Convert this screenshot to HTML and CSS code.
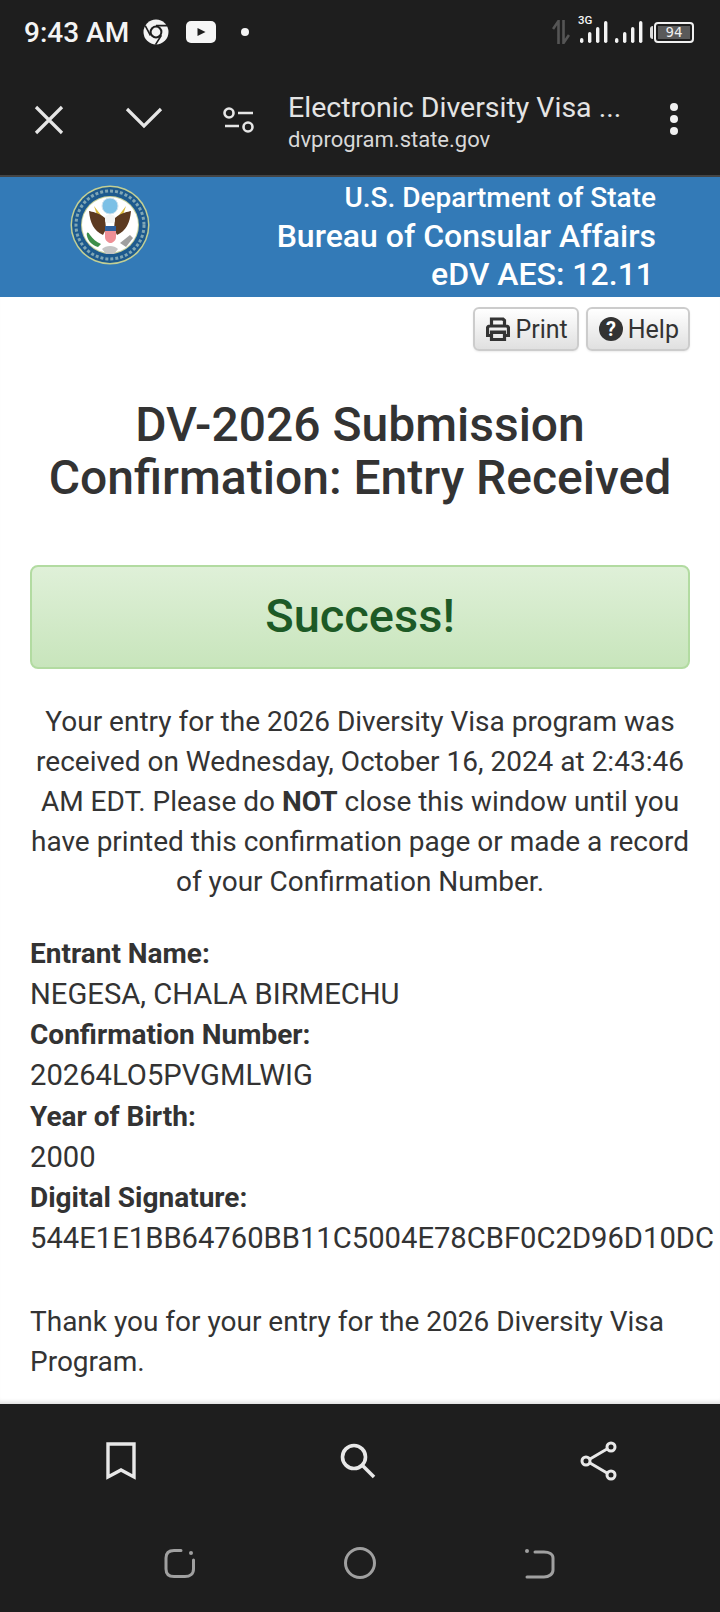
FILE: index.html
```html
<!DOCTYPE html>
<html lang="en">
<head>
<meta charset="utf-8">
<title>DV-2026 Submission Confirmation</title>
<link rel="stylesheet" href="styles.css">
</head>
<body>
<div class="phone">
  <div class="status">
    <div class="status-left">
      <span class="time">9:43 AM</span>
      <svg class="ic-chrome" viewBox="0 0 26 26"><circle cx="13" cy="13" r="12.5" fill="#f4f4f4"/><circle cx="13" cy="13" r="6.4" fill="#1e1e1e"/><circle cx="13" cy="13" r="4.4" fill="#f4f4f4"/><path d="M13 6.6H24.4M7.5 16.5L2.2 6.6M18.4 16.3L12.5 25.6" stroke="#1e1e1e" stroke-width="1.6" fill="none"/></svg>
      <svg class="ic-yt" viewBox="0 0 30 22"><rect width="30" height="22" rx="5" fill="#f6f6f6"/><path d="M11.500 7L19.500 11L11.500 15Z" fill="#1e1e1e"/></svg>
      <span class="dot"></span>
    </div>
    <div class="status-right">
      <svg class="ic-data" viewBox="0 0 18 24"><path d="M6.500 24V1L1 9M11.500 0V23L17 15" stroke="#555" stroke-width="2.600" fill="none"/></svg>
      <div class="signal">
        <span class="net">3G</span>
        <svg class="ic-bars" viewBox="0 0 28 24"><g fill="#f4f4f4"><rect x="0" y="18" width="3.400" height="5" rx="1.700"/><rect x="8" y="12" width="3.400" height="11" rx="1.700"/><rect x="16" y="7" width="3.400" height="16" rx="1.700"/><rect x="24" y="1" width="3.400" height="22" rx="1.700"/></g></svg>
        <svg class="ic-bars" viewBox="0 0 28 24"><g fill="#f4f4f4"><rect x="0" y="18" width="3.400" height="5" rx="1.700"/><rect x="8" y="12" width="3.400" height="11" rx="1.700"/><rect x="16" y="7" width="3.400" height="16" rx="1.700"/><rect x="24" y="1" width="3.400" height="22" rx="1.700"/></g></svg>
      </div>
      <div class="battery-cap"></div>
      <div class="battery"><span class="battery-fill">94</span></div>
    </div>
  </div>
  <div class="toolbar">
    <svg class="tb-close" viewBox="0 0 30 30"><path d="M2 2L28 28M28 2L2 28" stroke="#e6e6e6" stroke-width="3.200" fill="none"/></svg>
    <svg class="tb-chev" viewBox="0 0 38 24"><path d="M2 3L19 20L36 3" stroke="#e6e6e6" stroke-width="3.200" fill="none"/></svg>
    <svg class="tb-tune" viewBox="0 0 32 26"><g stroke="#e6e6e6" stroke-width="2.600" fill="none"><circle cx="6" cy="6" r="4.500"/><path d="M15 6H30M2 19H16"/><circle cx="25" cy="20" r="4.500"/></g></svg>
    <div class="tb-title">
      <div class="tb-name">Electronic Diversity Visa ...</div>
      <div class="tb-url">dvprogram.state.gov</div>
    </div>
    <div class="tb-more"><span></span><span></span><span></span></div>
  </div>
  <header class="banner">
    <svg class="seal" viewBox="0 0 80 80">
      <circle cx="40" cy="40" r="39.500" fill="#c3cf94"/>
      <circle cx="40" cy="40" r="38" fill="#1d5a8e"/>
      <circle cx="40" cy="40" r="34" fill="none" stroke="#7fa6b5" stroke-width="3" stroke-dasharray="3 2"/>
      <circle cx="40" cy="40" r="29" fill="#c7d09a"/>
      <circle cx="40" cy="40" r="28" fill="#fff"/>
      <circle cx="40" cy="21" r="8" fill="#7cc0e6" stroke="#cfe3ef"/>
      <path d="M24 21L34 34L29 36ZM56 21L46 34L51 36Z" fill="#d9b93c"/>
      <path d="M35 33C28 27 22 27 19 26C20 38 24 46 33 50L36 44ZM45 33C52 27 58 27 61 26C60 38 56 46 47 50L44 44Z" fill="#5c3a21"/>
      <rect x="35" y="30" width="10" height="8" rx="3" fill="#f4f4f4"/>
      <rect x="35" y="41" width="11" height="5" fill="#2c5f9e"/>
      <path d="M35 46H46V52C46 56 42 58 40.500 58C39 58 35 56 35 52Z" fill="#ef8f96"/>
      <path d="M20 50C18 46 16 47 17 51C18 56 22 60 28 62L31 59C26 57 23 54 20 50Z" fill="#3d8f4a"/>
      <path d="M50 58L60 50L63 53L56 62Z" fill="#a0a0a0"/>
      <path d="M32 64C36 60 44 60 48 64L44 69H36Z" fill="#c4c4c4"/>
    </svg>
    <div class="banner-text">
      <div class="b1">U.S. Department of State</div>
      <div class="b2">Bureau of Consular Affairs</div>
      <div class="b3">eDV AES: 12.11</div>
    </div>
  </header>
  <main class="page">
    <div class="actions">
      <button class="btn"><svg class="btn-ic" viewBox="0 0 24 24"><path d="M5.500 9V2H17L18.500 3.500V9M1.500 18.500V11.500C1.500 10 2.500 9 4 9H20C21.500 9 22.500 10 22.500 11.500V18.500H18.500V15H5.500V18.500ZM5.500 15.500H18.500V22.500H5.500Z" fill="none" stroke="#333" stroke-width="3.200"/></svg>Print</button>
      <button class="btn"><svg class="btn-ic" viewBox="0 0 24 24"><circle cx="12" cy="12" r="12" fill="#333"/><text x="12" y="18.500" class="btn-q">?</text></svg>Help</button>
    </div>
    <h1 class="title">DV-2026 Submission Confirmation: Entry Received</h1>
    <div class="alert">Success!</div>
    <p class="lead">Your entry for the 2026 Diversity Visa program was received on Wednesday, October 16, 2024 at 2:43:46 AM EDT. Please do <b>NOT</b> close this window until you have printed this confirmation page or made a record of your Confirmation Number.</p>
    <dl class="details">
      <dt>Entrant Name:</dt><dd>NEGESA, CHALA BIRMECHU</dd>
      <dt>Confirmation Number:</dt><dd>20264LO5PVGMLWIG</dd>
      <dt>Year of Birth:</dt><dd>2000</dd>
      <dt>Digital Signature:</dt><dd>544E1E1BB64760BB11C5004E78CBF0C2D96D10DC</dd>
    </dl>
    <p class="thanks">Thank you for your entry for the 2026 Diversity Visa Program.</p>
  </main>
  <div class="bottom">
    <div class="bottom-actions">
      <svg class="ba-book" viewBox="0 0 30 38"><path d="M2 2H28V35L15 28L2 35Z" stroke="#e8e8e8" stroke-width="3.400" fill="none"/></svg>
      <svg class="ba-search" viewBox="0 0 38 38"><circle cx="15" cy="15" r="11.500" stroke="#e8e8e8" stroke-width="3.600" fill="none"/><path d="M23 23L35 35" stroke="#e8e8e8" stroke-width="3.600"/></svg>
      <svg class="ba-share" viewBox="0 0 38 40"><g stroke="#e8e8e8" stroke-width="3" fill="none"><circle cx="6" cy="20" r="4"/><circle cx="31" cy="6" r="4"/><circle cx="31" cy="34" r="4"/><path d="M10 18L27 8M10 22L27 32"/></g></svg>
    </div>
    <div class="nav">
      <svg class="nav-ic" viewBox="0 0 32 32"><path d="M29.500 13V22C29.500 27 26 29.500 21 29.500H10C5 29.500 2 27 2 22V11C2 6 5 3.500 10 3.500H17" stroke="#a0a0a0" stroke-width="3" fill="none" stroke-linecap="round"/><circle cx="27" cy="6" r="2" fill="#a0a0a0"/></svg>
      <svg class="nav-ic" viewBox="0 0 32 32"><circle cx="16" cy="16" r="14.500" stroke="#a0a0a0" stroke-width="3" fill="none"/></svg>
      <svg class="nav-ic" viewBox="0 0 32 32"><path d="M3 30H20C25 30 29 27 29 23V11C29 7 25 5 20 5H11" stroke="#a0a0a0" stroke-width="3" fill="none" stroke-linecap="round"/><circle cx="3" cy="4" r="2" fill="#a0a0a0"/></svg>
    </div>
  </div>
</div>
</body>
</html>
```
FILE: styles.css
```css
* { box-sizing: border-box; }
html, body { margin: 0; padding: 0; }
body { font-family: Roboto, "Liberation Sans", sans-serif; background: #fff; color: #333; }
.phone { width: 720px; height: 1612px; display: flex; flex-direction: column; overflow: hidden; }

.status { height: 64px; background: #1e1e1e; display: flex; justify-content: space-between; align-items: center; padding: 0 26px 0 24px; }
.status-left { display: flex; align-items: center; }
.time { color: #f4f4f4; font-size: 28px; font-weight: 500; margin-right: 14px; }
.ic-chrome { width: 26px; height: 26px; margin-right: 17px; }
.ic-yt { width: 30px; height: 22px; margin-right: 25px; }
.dot { width: 8px; height: 8px; border-radius: 50%; background: #f4f4f4; }
.status-right { display: flex; align-items: center; }
.ic-data { width: 18px; height: 24px; margin-right: 10px; }
.signal { position: relative; display: flex; height: 24px; align-items: flex-end; gap: 7px; }
.net { position: absolute; left: -2px; top: -7px; font-size: 11.5px; font-weight: 500; color: #f4f4f4; }
.ic-bars { width: 28px; height: 24px; }
.battery-cap { width: 3px; height: 13px; background: #ddd; border-radius: 3px 0 0 3px; margin-left: 7px; margin-right: 1px; }
.battery { width: 40px; height: 21px; border: 2px solid #f0f0f0; border-radius: 4px; padding: 2px; display: flex; }
.battery-fill { flex: 1; background: #5a5a5a; color: #eee; font-family: "DejaVu Sans Mono", monospace; font-size: 14px; line-height: 13px; text-align: center; }

.toolbar { height: 113px; background: #1e1e1e; border-bottom: 2px solid #444; display: flex; align-items: center; padding-bottom: 7px; padding-left: 34px; }
.tb-close { width: 30px; height: 30px; margin-right: 61px; margin-top: 8px; flex: none; }
.tb-chev { width: 38px; height: 24px; margin-right: 60px; margin-top: 4px; flex: none; }
.tb-tune { width: 32px; height: 26px; margin-right: 33px; margin-top: 7px; flex: none; }
.tb-title { flex: none; width: 366px; margin-top: 11px; }
.tb-name { color: #e4e4e4; font-size: 28.5px; line-height: 36px; white-space: nowrap; }
.tb-url { color: #d8d8d8; font-size: 22px; line-height: 28px; }
.tb-more { display: flex; flex-direction: column; gap: 4px; margin-left: 16px; margin-top: 6px; }
.tb-more span { width: 8px; height: 8px; border-radius: 50%; background: #f0f0f0; }

.banner { height: 120px; background: #337ab7; display: flex; justify-content: space-between; padding: 8px 64px 0 70px; flex: none; }
.seal { width: 80px; height: 80px; flex: none; }
.banner-text { text-align: right; color: #fff; font-weight: 500; margin-top: -4px; }
.b1 { font-size: 28px; line-height: 34px; }
.b2 { font-size: 32px; line-height: 40px; padding-top: 1px; }
.b3 { font-size: 32px; line-height: 37px; padding-right: 2px; }

.page { flex: 1; padding: 10px 30px 0; min-height: 0; box-shadow: inset 0 -5px 4px -3px #ddd; }
.actions { display: flex; justify-content: flex-end; gap: 7px; }
.btn { display: flex; align-items: center; height: 44px; padding: 0 9px 0 11px; gap: 5px; font: 400 25px Roboto, sans-serif; color: #333; background: linear-gradient(#fff, #e0e0e0); border: 2px solid #ccc; border-radius: 6px; box-shadow: 0 1px 2px rgba(0,0,0,.08); }
.btn-ic { width: 24px; height: 24px; }
.btn-q { font: 700 20px Roboto, sans-serif; fill: #fff; text-anchor: middle; }
.title { font-size: 48px; font-weight: 500; line-height: 53px; text-align: center; margin: 47px 0 61px; color: #333; }
.alert { height: 104px; background: linear-gradient(#dff0d8, #c8e5bc); border: 2px solid #b2dba1; border-radius: 8px; color: #1d5a26; font-size: 47px; line-height: 98px; text-align: center; font-weight: 500; }
.lead { font-size: 28px; line-height: 40px; text-align: center; margin: 33px 0 32px; }
.details { margin: 0 0 42px; font-size: 28px; line-height: 40px; }
.details dt { font-weight: 700; }
.details dd { margin: 0; white-space: nowrap; font-size: 29.2px; line-height: 41.4px; }
.thanks { font-size: 28px; line-height: 40px; margin: 0; }

.bottom { height: 208px; background: #1e1e1e; flex: none; display: flex; flex-direction: column; }
.bottom-actions { display: flex; height: 113px; align-items: center; justify-content: space-between; padding: 0 102px 0 106px; }
.ba-book { width: 30px; height: 38px; }
.ba-search { width: 38px; height: 38px; }
.ba-share { width: 38px; height: 40px; }
.nav { display: flex; justify-content: space-between; padding: 30px 164px 0; }
.nav-ic { width: 32px; height: 32px; }
```
